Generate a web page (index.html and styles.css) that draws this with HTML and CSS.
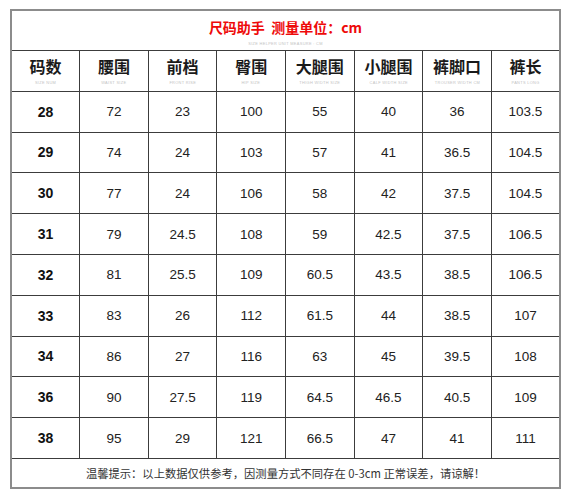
FILE: index.html
```html
<!DOCTYPE html>
<html lang="zh">
<head>
<meta charset="utf-8">
<title>尺码助手</title>
<link rel="stylesheet" href="styles.css">
</head>
<body>
<table class="size-table">
  <tr class="title-row">
    <td colspan="8">
      <div class="title">尺码助手&nbsp;&nbsp;测量单位：cm</div>
      <div class="tiny">SIZE HELPER UNIT MEASURE : CM</div>
    </td>
  </tr>
  <tr class="head-row">
    <th><div class="hd">码数</div><div class="tiny">SIZE NUM</div></th>
    <th><div class="hd">腰围</div><div class="tiny">WAIST SIZE</div></th>
    <th><div class="hd">前档</div><div class="tiny">FRONT RISE</div></th>
    <th><div class="hd">臀围</div><div class="tiny">HIP SIZE</div></th>
    <th><div class="hd">大腿围</div><div class="tiny">THIGH WIDTH SIZE</div></th>
    <th><div class="hd">小腿围</div><div class="tiny">CALF WIDTH SIZE</div></th>
    <th><div class="hd">裤脚口</div><div class="tiny">TROUSER WIDTH CM</div></th>
    <th><div class="hd">裤长</div><div class="tiny">PANTS LONG</div></th>
  </tr>
  <tr><td class="sz">28</td><td>72</td><td>23</td><td>100</td><td>55</td><td>40</td><td>36</td><td>103.5</td></tr>
  <tr><td class="sz">29</td><td>74</td><td>24</td><td>103</td><td>57</td><td>41</td><td>36.5</td><td>104.5</td></tr>
  <tr><td class="sz">30</td><td>77</td><td>24</td><td>106</td><td>58</td><td>42</td><td>37.5</td><td>104.5</td></tr>
  <tr><td class="sz">31</td><td>79</td><td>24.5</td><td>108</td><td>59</td><td>42.5</td><td>37.5</td><td>106.5</td></tr>
  <tr><td class="sz">32</td><td>81</td><td>25.5</td><td>109</td><td>60.5</td><td>43.5</td><td>38.5</td><td>106.5</td></tr>
  <tr><td class="sz">33</td><td>83</td><td>26</td><td>112</td><td>61.5</td><td>44</td><td>38.5</td><td>107</td></tr>
  <tr><td class="sz">34</td><td>86</td><td>27</td><td>116</td><td>63</td><td>45</td><td>39.5</td><td>108</td></tr>
  <tr><td class="sz">36</td><td>90</td><td>27.5</td><td>119</td><td>64.5</td><td>46.5</td><td>40.5</td><td>109</td></tr>
  <tr><td class="sz">38</td><td>95</td><td>29</td><td>121</td><td>66.5</td><td>47</td><td>41</td><td>111</td></tr>
  <tr class="foot-row">
    <td colspan="8">温馨提示：以上数据仅供参考，因测量方式不同存在 0-3cm 正常误差，请谅解！</td>
  </tr>
</table>
</body>
</html>
```
FILE: styles.css
```css
html, body {
  margin: 0;
  padding: 0;
  background: #fff;
}
body {
  padding: 9px 0 0 10px;
  font-family: "Liberation Sans", "Noto Sans CJK SC", sans-serif;
  color: #222;
}
.size-table {
  width: 551px;
  border-collapse: collapse;
  table-layout: fixed;
  border: 2px solid #8c8c8c;
}
.size-table td, .size-table th {
  border: 1px solid #3c3c3c;
  text-align: center;
  vertical-align: middle;
  padding: 0;
  height: 39.8px;
  font-size: 13.5px;
  font-weight: normal;
  color: #222;
}
.size-table td.sz {
  font-weight: bold;
  font-size: 14px;
  color: #111;
}
.title-row td {
  height: 39px;
}
.title {
  font-family: "Noto Sans CJK SC", sans-serif;
  font-weight: bold;
  font-size: 14px;
  line-height: 20px;
  color: #ee0a0a;
  padding-top: 3px;
}
.hd {
  font-family: "Noto Sans CJK SC", sans-serif;
  font-weight: bold;
  font-size: 16px;
  line-height: 20px;
  color: #1a1a1a;
  margin-top: 1px;
}
.tiny {
  font-size: 6px;
  line-height: 6px;
  margin-top: 4px;
  color: #c4c4c4;
  transform: scale(0.65);
  white-space: nowrap;
  letter-spacing: 0.5px;
}
.size-table tr.foot-row td {
  height: 28px;
  font-family: "Noto Sans CJK SC", sans-serif;
  font-size: 11.3px;
  color: #333;
}
```
